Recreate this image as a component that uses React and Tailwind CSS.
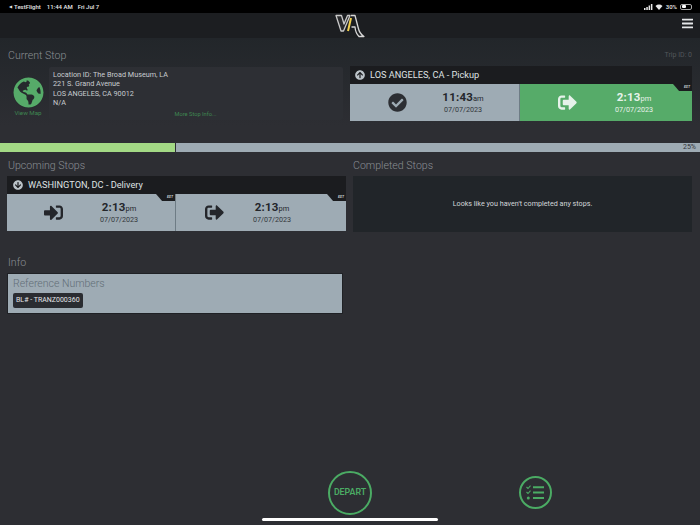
import React from "react";
import { FaCheckCircle, FaSignInAlt, FaSignOutAlt, FaArrowCircleUp, FaArrowCircleDown, FaGlobeAmericas, FaBars } from "react-icons/fa";

function Est() {
  return (
    <div className="absolute top-0 right-0 w-[19px] h-[7px] bg-[#1b1c1f] [clip-path:polygon(0_0,100%_0,100%_100%,32%_100%)] flex justify-end pr-[2px]">
      <span className="text-[3.5px] leading-[7px] font-bold italic text-[#c8ced3]">EST</span>
    </div>
  );
}

function TimeCell({ icon, time, ap, date, green, est, className, iconClass, textClass }) {
  return (
    <div className={`relative flex items-center ${green ? "bg-[#56ab69]" : "bg-[#9eabb4]"} ${className}`}>
      <div className={`flex justify-center ${iconClass}`}>{icon}</div>
      <div className={`flex flex-col items-center ${textClass} ${green ? "text-[#e6f2ea]" : "text-[#24262b]"}`}>
        <div className="leading-[12px] font-bold text-[11.5px] tracking-[0.2px] whitespace-nowrap">
          {time}<span className="font-normal text-[7.5px] tracking-normal">{ap}</span>
        </div>
        <div className={`text-[7.2px] leading-[9px] whitespace-nowrap ${green ? "" : "text-[#33363b]"}`}>{date}</div>
      </div>
      {est && <Est />}
    </div>
  );
}

function SectionTitle({ children }) {
  return <div className="h-[14px] text-[10.6px] font-light leading-[16px] text-[#8a8f93]">{children}</div>;
}

function StatusBar() {
  return (
    <div className="h-[13px] bg-black flex items-center justify-between pl-[9px] pr-[8px] text-[6px] text-[#e8e8e8] font-medium shrink-0">
      <div className="flex items-center">
        <span className="text-[4px] mr-[2px]">◀</span>
        <span>TestFlight</span>
        <span className="ml-[6px]">11:44 AM</span>
        <span className="ml-[5px]">Fri Jul 7</span>
      </div>
      <div className="flex items-center gap-[2px]">
        <svg width="9" height="6" viewBox="0 0 9 6" fill="#e8e8e8">
          <rect x="0" y="4" width="1.5" height="2" /><rect x="2.3" y="3" width="1.5" height="3" /><rect x="4.6" y="1.5" width="1.5" height="4.5" /><rect x="6.9" y="0" width="1.5" height="6" />
        </svg>
        <svg width="8" height="6" viewBox="0 0 8 6" className="mr-[1px]">
          <path d="M0.5 2 A5 5 0 0 1 7.5 2 L4 6 Z" fill="#e8e8e8" />
        </svg>
        <span>30%</span>
        <div className="w-[12px] h-[6px] border-[0.5px] border-[#aaa] rounded-[2px] p-[0.5px] ml-[1px]">
          <div className="w-[4px] h-full bg-white rounded-[1px]" />
        </div>
      </div>
    </div>
  );
}

function Logo() {
  return (
    <svg width="30" height="24" viewBox="0 0 30 24">
      <path d="M1 1.5 L6.5 1.5 L9 10 L12.5 1.5 L15 1.5 L8.5 17 L6 17 Z" fill="#2a2b2d" stroke="#c9c9c9" strokeWidth="1.3" strokeLinejoin="round" />
      <path d="M12.5 4 L9.5 17" stroke="#f2d04e" strokeWidth="2" transform="translate(3.5 0)" />
      <path d="M16 1.5 L20 1.5 L23 13 Q24.5 20 29 22.5 L24 22.5 Q20.5 19 20 13 L16.5 13" fill="none" stroke="#d6d6d6" strokeWidth="1.3" strokeLinejoin="round" />
    </svg>
  );
}

export default function App() {
  return (
    <div className="relative w-[700px] h-[525px] overflow-hidden flex flex-col bg-[#2d2e33] antialiased font-['Roboto','Liberation_Sans',sans-serif]">
      <StatusBar />
      <div className="h-[25px] shrink-0 bg-[#1c1e21] flex items-center justify-center relative">
        <Logo />
        <FaBars className="absolute right-[7px] top-[4px] w-[11px] h-[13px] text-[#e4e6e8]" />
      </div>

      <div className="flex-1 flex flex-col bg-gradient-to-b from-[#22262a] to-[#2d2e33] to-[18%]">
        <div className="flex justify-between items-end pl-[8px] pr-[8px] pt-[10px]">
          <SectionTitle>Current Stop</SectionTitle>
          <div className="text-[7px] leading-[14px] text-[#53575b]">Trip ID: 0</div>
        </div>

        <div className="flex pl-[7px] pr-[8px] mt-[4px]">
          <div className="w-[336px] flex pt-[1px]">
            <div className="w-[42px] flex flex-col items-center pt-[10px]">
              <div className="w-[31px] h-[31px] rounded-full bg-[#262a2d] overflow-hidden flex items-center justify-center">
                <FaGlobeAmericas className="w-[31px] h-[31px] text-[#56ab69]" />
              </div>
              <div className="text-[6.2px] leading-[8px] text-[#3f8751] mt-[1px]">View Map</div>
            </div>
            <div className="flex-1 h-[53px] bg-[#2d2f34] rounded-[2px] pl-[4px] pt-[3px] flex flex-col">
              <div className="text-[7.25px] leading-[9.4px] text-[#c8ccd0]">
                <div>Location ID: The Broad Museum, LA</div>
                <div>221 S. Grand Avenue</div>
                <div>LOS ANGELES, CA 90012</div>
                <div>N/A</div>
              </div>
              <div className="text-[5.7px] leading-[8px] text-[#3f8751] text-center mt-[2px] pr-[5px]">More Stop Info...</div>
            </div>
          </div>
          <div className="w-[342px] ml-[7px] bg-[#1b1c1f]">
            <div className="h-[18px] flex items-center pl-[5px] text-[#dfe2e4] text-[9.2px]">
              <FaArrowCircleUp className="w-[10px] h-[10px] text-[#bcc3c8] mr-[5px]" />
              <span>LOS ANGELES, CA - Pickup</span>
            </div>
            <div className="flex h-[37px]">
              <TimeCell className="w-[170px] border-r border-[#6e7c85]" iconClass="w-[94px]" textClass="w-[38px]" icon={<FaCheckCircle className="w-[19px] h-[19px] text-[#2c2e33]" />} time="11:43" ap="am" date="07/07/2023" />
              <TimeCell green est className="flex-1" iconClass="w-[95px]" textClass="w-[38px]" icon={<FaSignOutAlt className="w-[19px] h-[19px] text-[#e6f2ea]" />} time="2:13" ap="pm" date="07/07/2023" />
            </div>
          </div>
        </div>

        <div className="h-[9px] mt-[22px] bg-[#9eabb4] flex items-center relative shrink-0">
          <div className="w-[176px] h-full bg-[#a3d985] border-r border-[#2d2e33]" />
          <div className="flex-1 text-right text-[7px] leading-[9px] pr-[4px] text-[#33363b]">25%</div>
        </div>

        <div className="flex pl-[7px] pr-[8px] mt-[6px]">
          <div className="w-[339px]">
            <div className="pl-[1px]"><SectionTitle>Upcoming Stops</SectionTitle></div>
            <div className="mt-[4px] bg-[#1b1c1f]">
              <div className="h-[18px] flex items-center pl-[6px] text-[#dfe2e4] text-[9.2px]">
                <FaArrowCircleDown className="w-[10px] h-[10px] text-[#bcc3c8] mr-[5px]" />
                <span>WASHINGTON, DC - Delivery</span>
              </div>
              <div className="flex h-[37px]">
                <TimeCell est className="w-[169px] border-r border-[#6e7c85]" iconClass="w-[93px]" textClass="w-[38px]" icon={<FaSignInAlt className="w-[19px] h-[19px] text-[#24262b]" />} time="2:13" ap="pm" date="07/07/2023" />
                <TimeCell est className="flex-1" iconClass="w-[77px]" textClass="w-[38px]" icon={<FaSignOutAlt className="w-[19px] h-[19px] text-[#24262b]" />} time="2:13" ap="pm" date="07/07/2023" />
              </div>
            </div>
          </div>
          <div className="w-[339px] ml-[7px]">
            <SectionTitle>Completed Stops</SectionTitle>
            <div className="mt-[4px] h-[56px] bg-[#212529] flex items-center justify-center text-[7.2px] text-[#d4d7da]">
              Looks like you haven't completed any stops.
            </div>
          </div>
        </div>

        <div className="pl-[8px] mt-[23px]"><SectionTitle>Info</SectionTitle></div>
        <div className="ml-[7px] mt-[4px] w-[336px] h-[41px] bg-[#9eabb4] border border-[#1f2125] pl-[5px] flex flex-col items-start">
          <div className="text-[10.5px] font-light leading-[13px] pt-[3px] h-[17px] text-[#626e77]">Reference Numbers</div>
          <div className="mt-[2px] h-[15px] px-[3px] rounded-[2px] bg-[#2a2c31] text-[#e3e5e7] text-[7px] leading-[15px]">BL# - TRANZ000360</div>
        </div>

        <div className="mt-auto h-[54px] flex items-start pl-[328px] shrink-0">
          <div className="w-[44px] h-[44px] rounded-full border-2 border-[#4bab64] flex items-center justify-center text-[#4bab64] text-[8.8px] font-semibold">DEPART</div>
          <div className="ml-[147px] mt-[5px] w-[33px] h-[33px] rounded-full border-2 border-[#4bab64] flex items-center justify-center">
            <svg width="19" height="15" viewBox="0 0 19 15" fill="none" stroke="#4bab64">
              <path d="M0.5 2 L2 3.5 L4.5 0.7 M0.5 7 L2 8.5 L4.5 5.7" strokeWidth="1.1" />
              <circle cx="2.3" cy="13" r="1.5" fill="#4bab64" stroke="none" />
              <path d="M7 2.2 H18 M7 7.4 H18 M7 13 H18" strokeWidth="2" />
            </svg>
          </div>
        </div>
      </div>

      <div className="absolute left-[262px] top-[518px] w-[176px] h-[3px] rounded-full bg-white" />
    </div>
  );
}
